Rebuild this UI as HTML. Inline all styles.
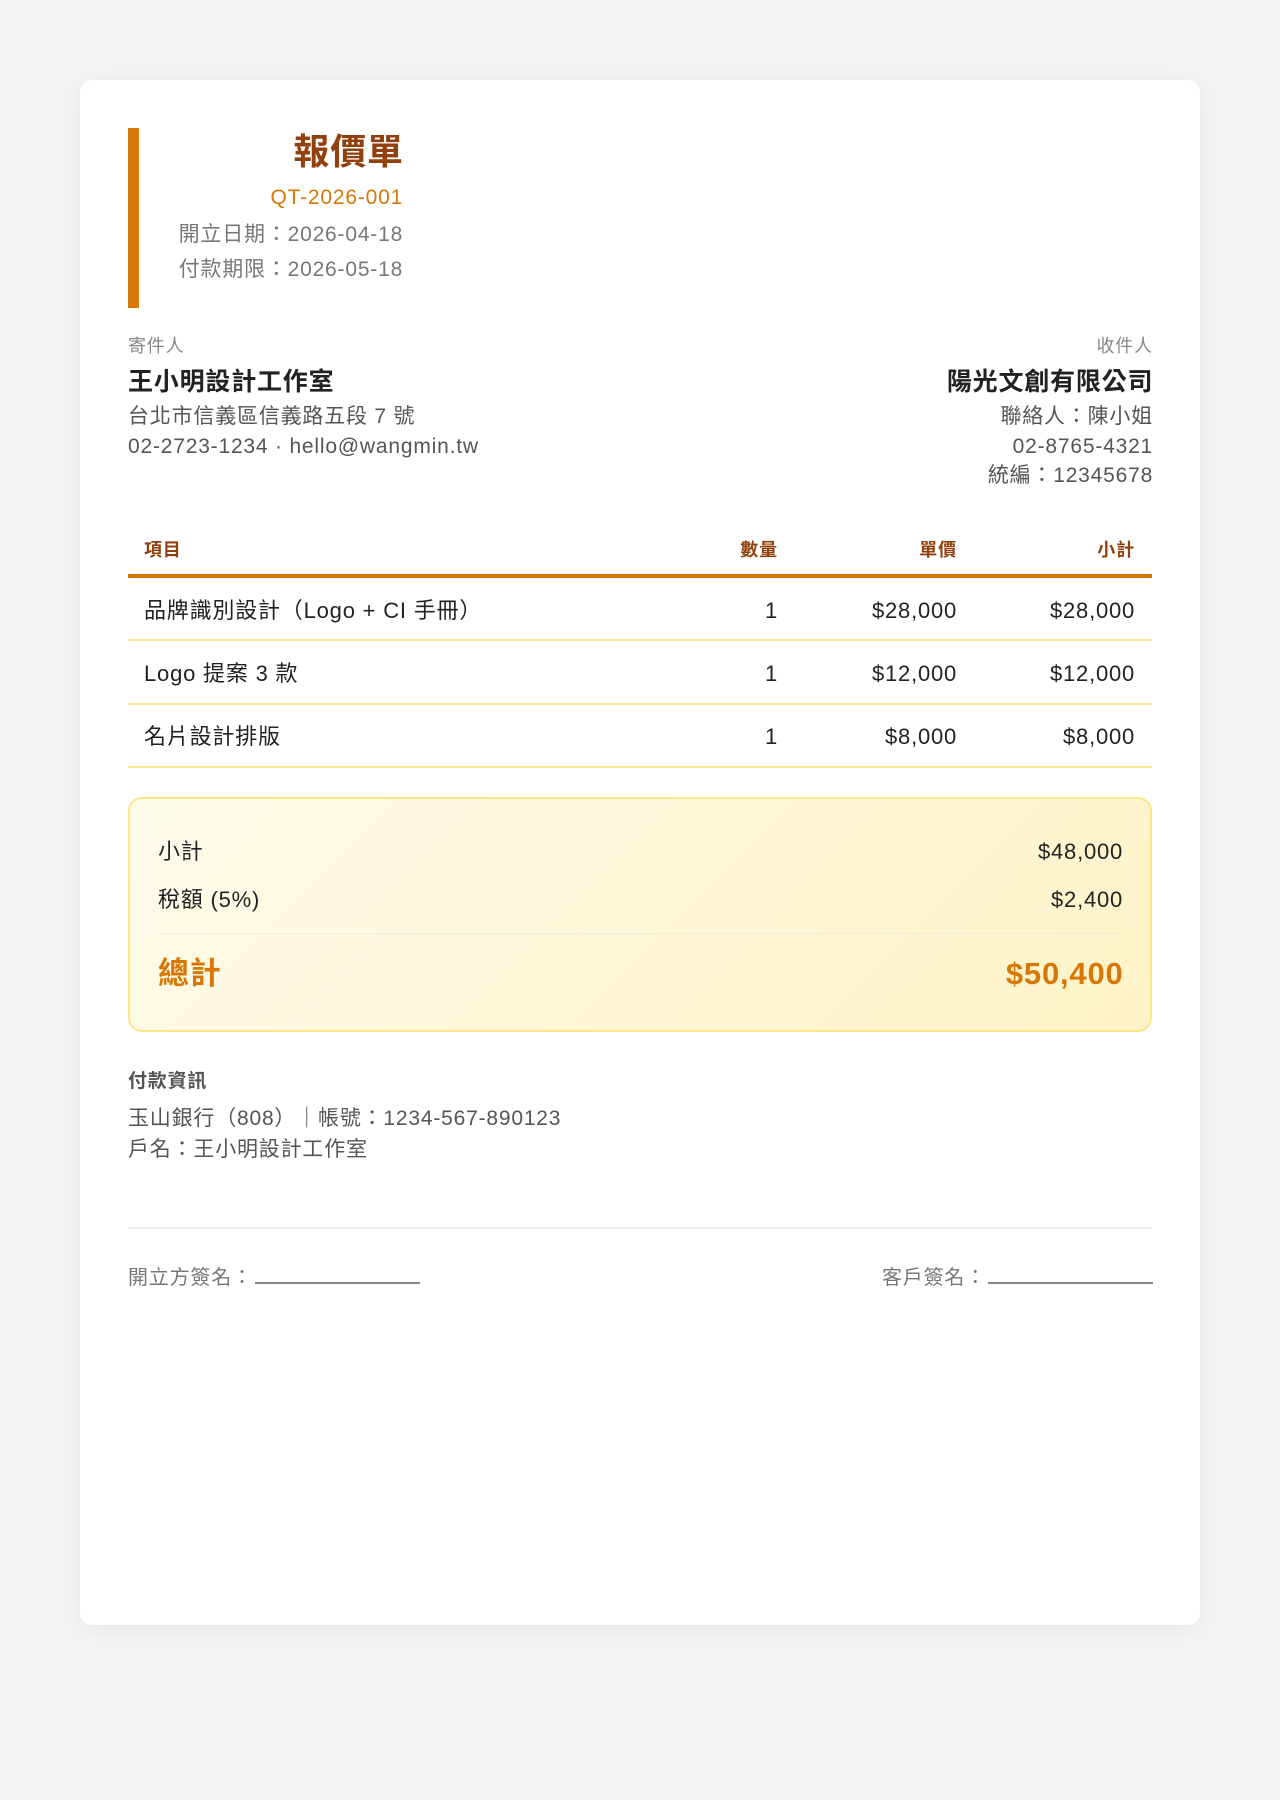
<!DOCTYPE html>
<html><head><meta charset="utf-8"><style>
*{margin:0;padding:0;box-sizing:border-box}
body{width:1280px;height:1800px;background:#f4f4f4;position:relative;font-family:"Liberation Sans","Noto Sans CJK TC",sans-serif;overflow:hidden;letter-spacing:0.05em}
.card{position:absolute;left:80px;top:80px;width:1120px;height:1545px;background:#fff;border-radius:12px;box-shadow:0 4px 20px rgba(0,0,0,.06)}
.a{position:absolute;white-space:nowrap;line-height:1}
.r{text-align:right}
.r.a{margin-right:-0.05em}
.hl{position:absolute;left:128px;width:1024px}
.sig{display:inline-block;width:165px;border-bottom:2px solid #888;height:18px;vertical-align:baseline;margin-left:2px}
</style></head><body>
<div class="card"></div>
<div style="position:absolute;left:128px;top:128px;width:11px;height:180px;background:#d97706"></div>
<div class="a r" style="right:878px;top:134px;font-size:36px;font-weight:bold;color:#92400e">報價單</div>
<div class="a r" style="right:878px;top:187px;font-size:21px;color:#d97706">QT-2026-001</div>
<div class="a r" style="right:878px;top:224px;font-size:21px;color:#777">開立日期：2026-04-18</div>
<div class="a r" style="right:878px;top:259px;font-size:21px;color:#777">付款期限：2026-05-18</div>

<div class="a" style="left:128px;top:337px;font-size:18px;color:#888">寄件人</div>
<div class="a" style="left:128px;top:370px;font-size:25px;font-weight:bold;color:#222">王小明設計工作室</div>
<div class="a" style="left:128px;top:406px;font-size:21px;color:#555">台北市信義區信義路五段 7 號</div>
<div class="a" style="left:128px;top:436px;font-size:21px;color:#555">02-2723-1234 · hello@wangmin.tw</div>

<div class="a r" style="right:128px;top:337px;font-size:18px;color:#888">收件人</div>
<div class="a r" style="right:128px;top:370px;font-size:25px;font-weight:bold;color:#222">陽光文創有限公司</div>
<div class="a r" style="right:128px;top:406px;font-size:21px;color:#555">聯絡人：陳小姐</div>
<div class="a r" style="right:128px;top:436px;font-size:21px;color:#555">02-8765-4321</div>
<div class="a r" style="right:128px;top:465px;font-size:21px;color:#555">統編：12345678</div>

<div style="font-size:18px;font-weight:bold;color:#92400e">
<div class="a" style="left:144px;top:541px">項目</div>
<div class="a r" style="right:503px;top:541px">數量</div>
<div class="a r" style="right:324px;top:541px">單價</div>
<div class="a r" style="right:146px;top:541px">小計</div>
</div>
<div class="hl" style="top:574px;height:4px;background:#d97706"></div>

<div style="font-size:22px;color:#222">
<div class="a" style="left:144px;top:600px">品牌識別設計（Logo + CI 手冊）</div>
<div class="a r" style="right:503px;top:600px">1</div>
<div class="a r" style="right:324px;top:600px">$28,000</div>
<div class="a r" style="right:146px;top:600px">$28,000</div>
<div class="a" style="left:144px;top:663px">Logo 提案 3 款</div>
<div class="a r" style="right:503px;top:663px">1</div>
<div class="a r" style="right:324px;top:663px">$12,000</div>
<div class="a r" style="right:146px;top:663px">$12,000</div>
<div class="a" style="left:144px;top:726px">名片設計排版</div>
<div class="a r" style="right:503px;top:726px">1</div>
<div class="a r" style="right:324px;top:726px">$8,000</div>
<div class="a r" style="right:146px;top:726px">$8,000</div>
</div>
<div class="hl" style="top:639px;height:2px;background:#fde68a"></div>
<div class="hl" style="top:703px;height:2px;background:#fde68a"></div>
<div class="hl" style="top:766px;height:2px;background:#fde68a"></div>

<div style="position:absolute;left:128px;top:797px;width:1024px;height:235px;border:2px solid #fde68a;border-radius:14px;background:linear-gradient(135deg,#fffbeb,#fef3c7)"></div>
<div class="a" style="left:158px;top:841px;font-size:22px;color:#222">小計</div>
<div class="a r" style="right:158px;top:841px;font-size:22px;color:#222">$48,000</div>
<div class="a" style="left:158px;top:889px;font-size:22px;color:#222">稅額 (5%)</div>
<div class="a r" style="right:158px;top:889px;font-size:22px;color:#222">$2,400</div>
<div style="position:absolute;left:158px;top:933px;width:964px;height:1px;background:#f0ece0"></div>
<div class="a" style="left:158px;top:958px;font-size:31px;font-weight:bold;color:#d97706">總計</div>
<div class="a r" style="right:158px;top:958px;font-size:31px;font-weight:bold;color:#d97706">$50,400</div>

<div class="a" style="left:128px;top:1072px;font-size:19px;font-weight:bold;color:#555">付款資訊</div>
<div class="a" style="left:128px;top:1108px;font-size:21px;color:#555">玉山銀行（808）｜帳號：1234-567-890123</div>
<div class="a" style="left:128px;top:1139px;font-size:21px;color:#555">戶名：王小明設計工作室</div>

<div class="hl" style="top:1227px;height:2px;background:#eee"></div>
<div class="a" style="left:128px;top:1266px;font-size:20px;color:#777">開立方簽名：<span class="sig"></span></div>
<div class="a r" style="right:128px;top:1266px;font-size:20px;color:#777">客戶簽名：<span class="sig"></span></div>
</body></html>
